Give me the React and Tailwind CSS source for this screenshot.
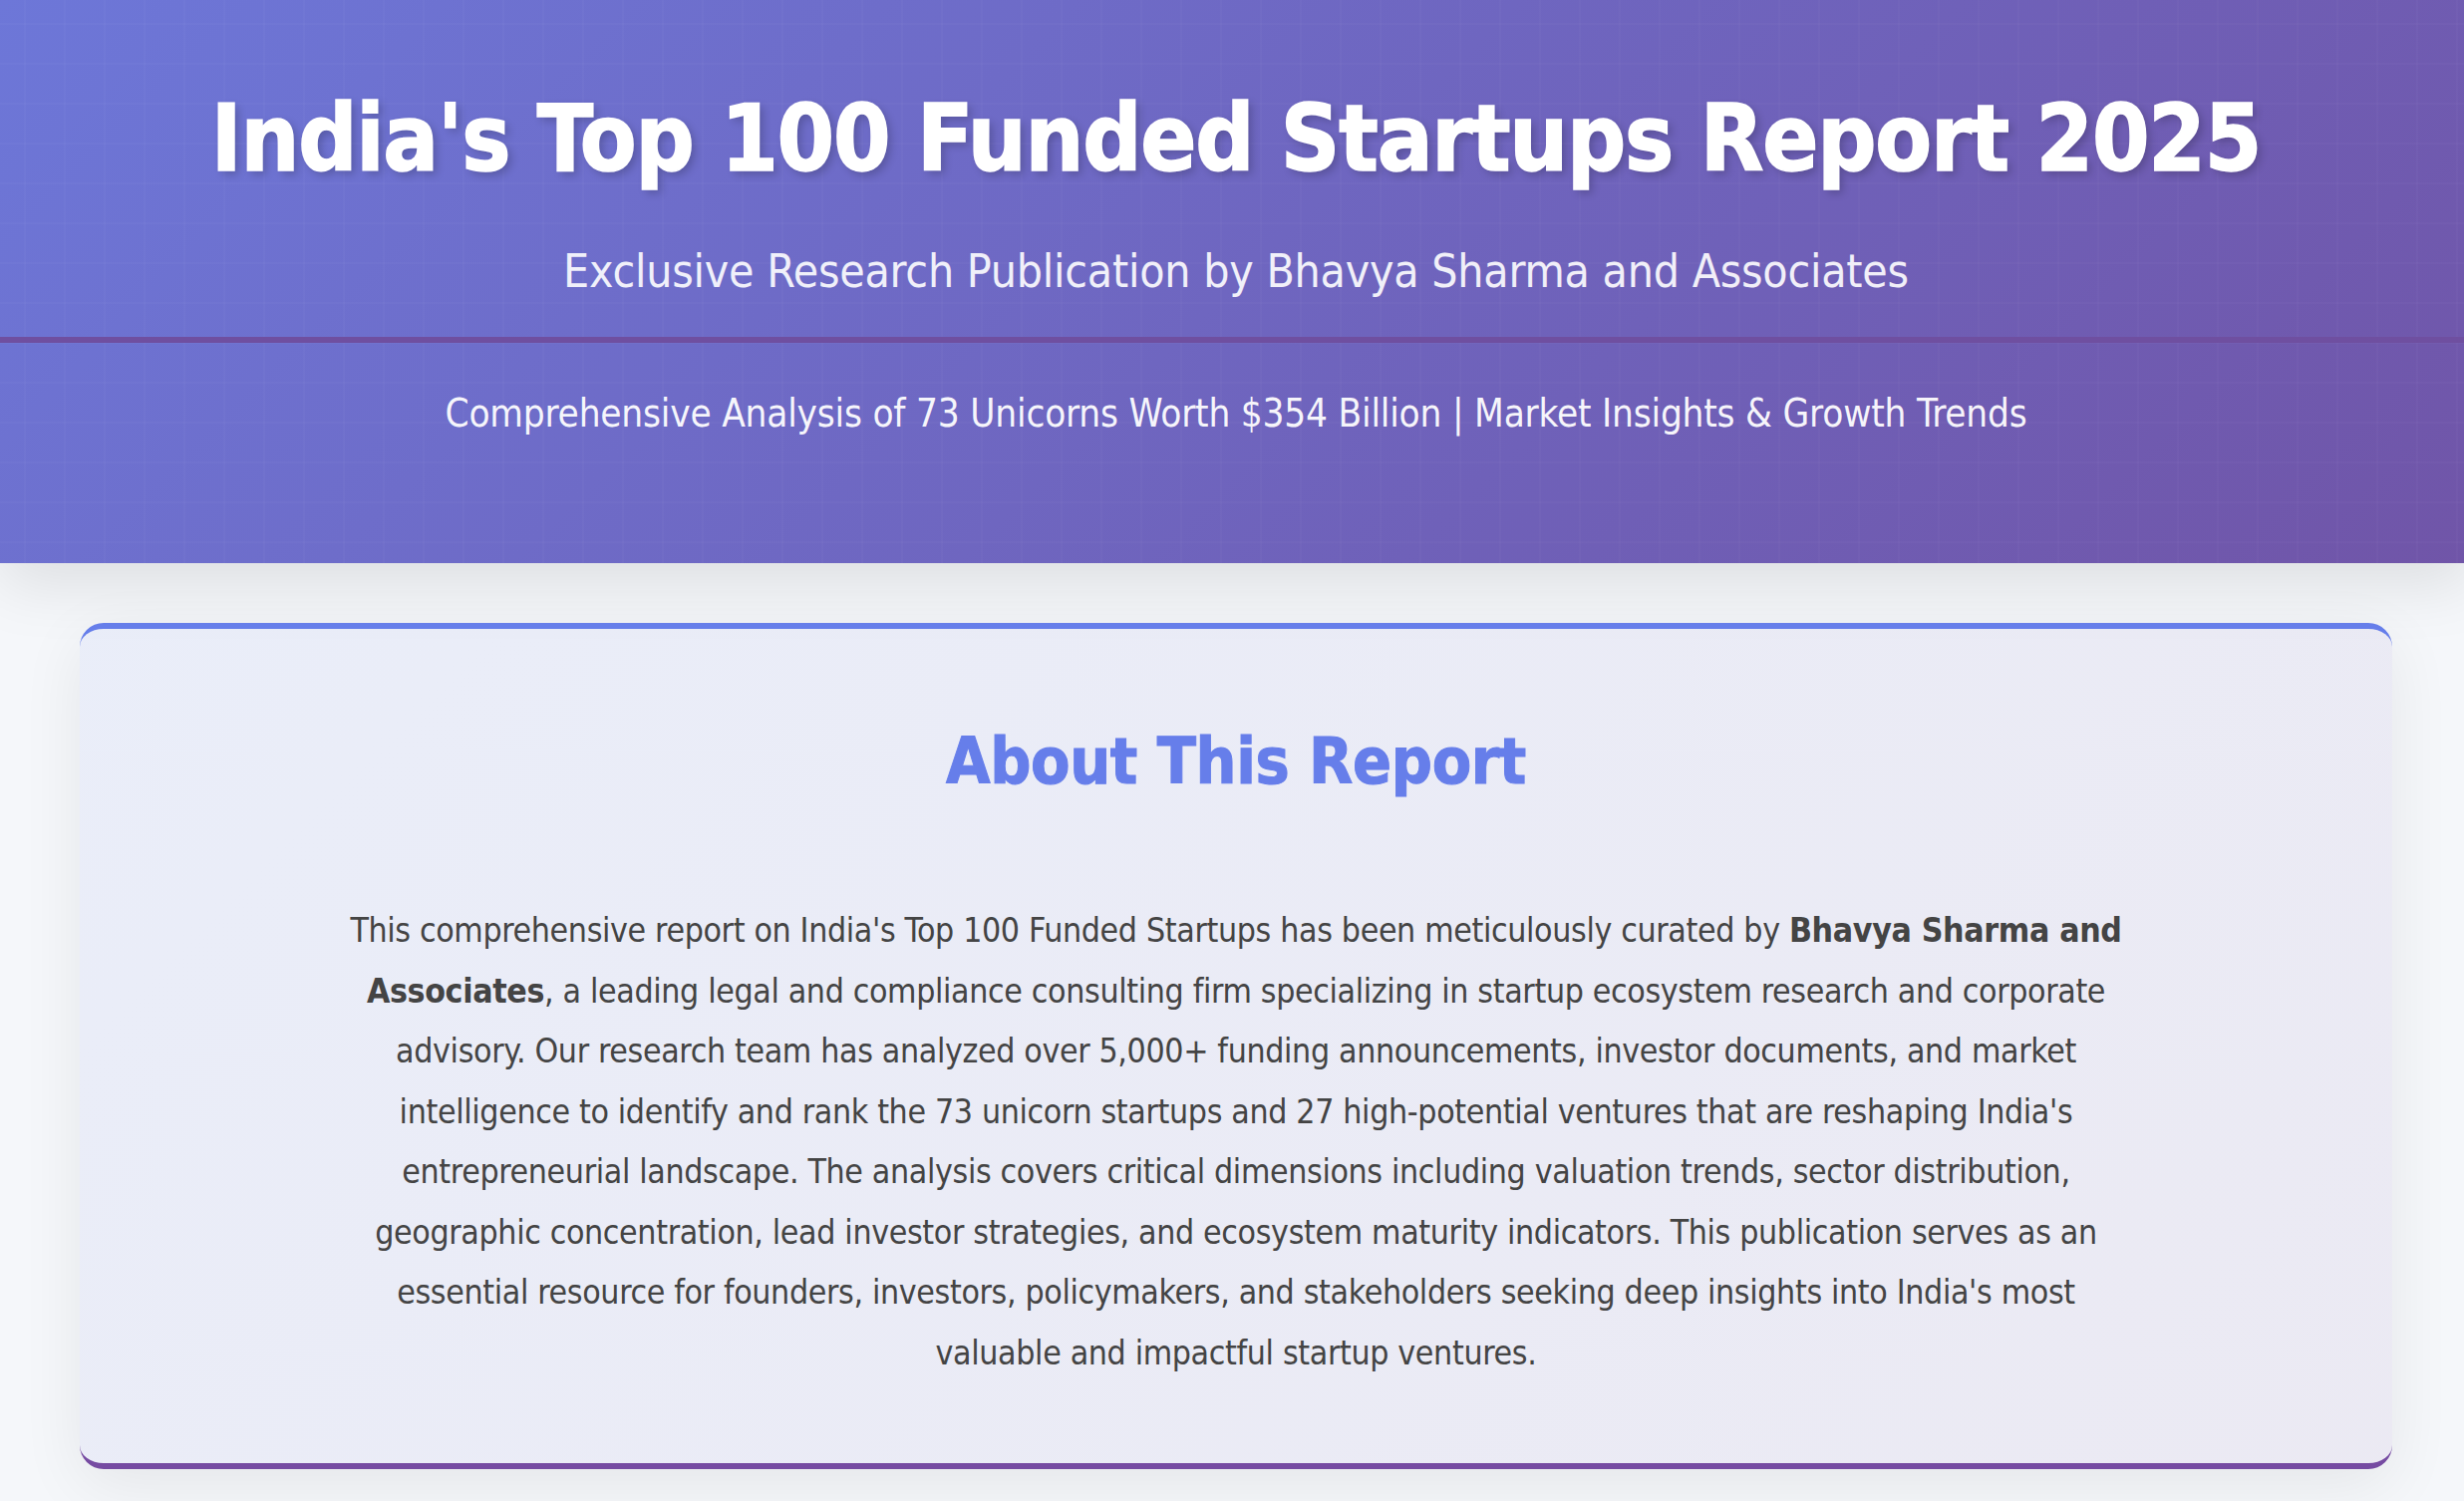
import React from "react";

const font = "font-['DejaVu_Sans_Condensed','DejaVu_Sans',sans-serif] [font-stretch:condensed]";

export default function App() {
  return (
    <div className={`min-h-screen overflow-hidden bg-[#f5f7fa] ${font}`}>
      <div className="w-[2480px]">
        <header className="h-[565px] shadow-[0_20px_60px_rgba(0,0,0,0.1)] bg-[linear-gradient(90deg,rgba(255,255,255,0.02)_2px,transparent_2px),linear-gradient(0deg,rgba(255,255,255,0.02)_2px,transparent_2px),linear-gradient(135deg,#6d77d8,#7055a8)] [background-size:40px_40px,40px_40px,100%_100%] [background-position:24px_0,0_25px,0_0]">
          <div className="h-[344px] border-b-[6px] border-[#6f4fa0] pt-[80px] text-center">
            <h1 className="text-[92px] leading-[120px] font-bold tracking-[-1.2px] text-white [-webkit-text-stroke:1.5px_#fff] [text-shadow:4px_4px_8px_rgba(0,0,0,0.2)]">
              India's Top 100 Funded Startups Report 2025
            </h1>
            <p className="mt-[42px] text-[46px] leading-[60px] tracking-[-0.23px] text-white/90">
              Exclusive Research Publication by Bhavya Sharma and Associates
            </p>
          </div>
          <p className="mt-[41px] text-center text-[38.4px] leading-[60px] tracking-[-0.22px] text-white/95">
            Comprehensive Analysis of 73 Unicorns Worth $354 Billion | Market Insights &amp; Growth Trends
          </p>
        </header>

        <main className="px-[80px] pt-[60px] pb-[32px]">
          <section className="h-[849px] rounded-[24px] border-t-[6px] border-b-[6px] border-t-[#667eea] border-b-[#764ba2] bg-[linear-gradient(135deg,#667eea14,#764ba214)] pt-[93px] shadow-[0_16px_64px_rgba(0,0,0,0.07)]">
            <h2 className="text-center text-[64px] leading-[80px] font-bold tracking-[-0.37px] text-[#667eea] [-webkit-text-stroke:1px_#667eea]">About This Report</h2>
            <p className="mx-auto mt-[100px] w-[1800px] text-center text-[33.6px] leading-[60.5px] tracking-[-0.35px] text-[#444]">
              This comprehensive report on India's Top 100 Funded Startups has been meticulously curated by{" "}
              <strong className="font-bold">Bhavya Sharma and Associates</strong>, a leading legal and compliance consulting firm specializing in startup ecosystem research and corporate advisory. Our research team has analyzed over 5,000+ funding announcements, investor documents, and market intelligence to identify and rank the 73 unicorn startups and 27 high-potential ventures that are reshaping India's entrepreneurial landscape. The analysis covers critical dimensions including valuation trends, sector distribution, geographic concentration, lead investor strategies, and ecosystem maturity indicators. This publication serves as an essential resource for founders, investors, policymakers, and stakeholders seeking deep insights into India's most valuable and impactful startup ventures.
            </p>
          </section>
        </main>
      </div>
    </div>
  );
}
